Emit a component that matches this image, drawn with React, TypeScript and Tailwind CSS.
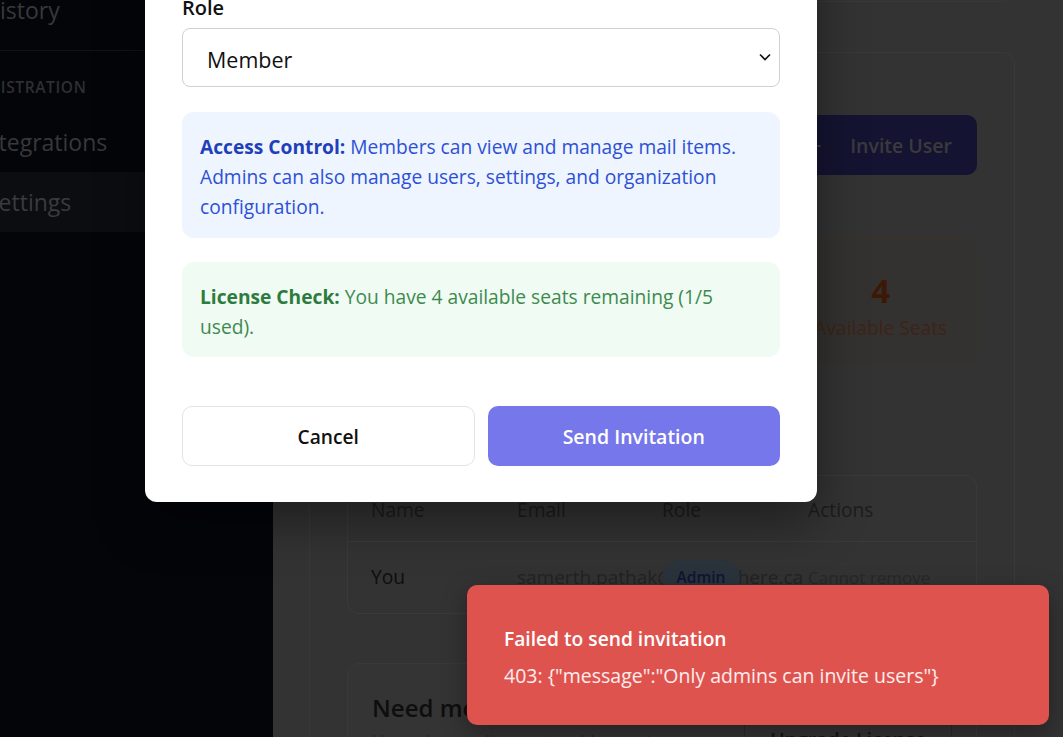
import { Clock, Plug, Settings, Plus, Users } from "lucide-react";

const stats = [
  { value: "1", label: "Seats Used", box: "bg-[#2f3339] border-[#303a47]", num: "text-[#0f1d3d]", text: "text-[#1a2540]" },
  { value: "5", label: "Total Seats", box: "bg-[#31342f] border-[#2f3d31]", num: "text-[#0b2a14]", text: "text-[#173020]" },
  { value: "4", label: "Available Seats", box: "bg-[#343230] border-[#3a3229]", num: "text-[#3c1806]", text: "text-[#3c2418]" },
];

function Sidebar() {
  return (
    <aside className="w-[273px] shrink-0 bg-[#040509] overflow-hidden">
      <div className="-ml-[75px] w-[348px]">
        <div className="-mt-[20px] h-[60px] flex items-center gap-[14px] pl-[22px] text-[23px] font-medium text-[#37383b]">
          <Clock size={22} />
          History
        </div>
        <div className="mt-[10px] border-t border-[#111318]" />
        <div className="pt-[24px] pl-[20px] h-[50px] flex items-center text-[15.5px] font-semibold tracking-[0.04em] uppercase text-[#2e2f33]">
          Administration
        </div>
        <div className="mt-[11px] h-[60px] flex items-center gap-[14px] pl-[17px] text-[23px] font-medium text-[#37383b]">
          <Plug size={22} />
          Integrations
        </div>
        <div className="h-[60px] flex items-center gap-[14px] pl-[25px] bg-[#0c0d11] text-[23px] font-medium text-[#3a3b3e]">
          <Settings size={22} />
          Settings
        </div>
      </div>
    </aside>
  );
}

function Background() {
  return (
    <main className="flex-1 bg-[#333333] overflow-hidden">
      <div className="pl-[36px] w-[742px]">
        {/* card above, scrolled out */}
        <div className="-mt-[58px] h-[60px] rounded-[12px] border border-[#393939]" />

        <section className="mt-[50px] rounded-[12px] border border-[#393939] px-[37px] pt-[36px] pb-[40px]">
          <div className="h-[112px] flex items-center justify-between">
            <div>
              <h2 className="text-[27px] font-bold text-[#111]">Team Management</h2>
              <p className="text-[17px] text-[#262626]">Manage who has access to your organization</p>
            </div>
            <button className="h-[60px] pt-[2px] flex items-center gap-[26px] rounded-[10px] bg-[#141432] pl-[24px] pr-[25px] text-[19.5px] font-semibold text-[#3a3a3d]">
              <Plus size={20} strokeWidth={2.5} />
              Invite User
            </button>
          </div>

          <div className="mt-[37px] grid grid-cols-3 gap-[20px]">
            {stats.map((s) => (
              <div key={s.label} className={`h-[127px] rounded-[12px] border pt-[32px] pl-[4px] text-center ${s.box}`}>
                <div className={`h-[40px] text-[33px] leading-[40px] font-bold ${s.num}`}>{s.value}</div>
                <div className={`mt-[3px] text-[19.2px] leading-[28px] ${s.text}`}>{s.label}</div>
              </div>
            ))}
          </div>

          <div className="mt-[40px] h-[70px] flex items-center gap-3 text-[21px] font-semibold text-[#111]">
            <Users size={22} />
            Team Members (1)
          </div>

          <div className="rounded-[12px] border border-[#3a3a3a]">
            <div className="h-[66px] pt-[3px] grid grid-cols-[146px_145px_146px_1fr] items-center px-[23px] border-b border-[#3a3a3a] text-[19.2px] font-medium text-[#1c1c1c]">
              <span>Name</span>
              <span>Email</span>
              <span>Role</span>
              <span>Actions</span>
            </div>
            <div className="h-[71px] grid grid-cols-[146px_145px_146px_1fr] items-center px-[23px]">
              <span className="text-[19.2px] font-medium text-[#0d0d0d]">You</span>
              <span className="whitespace-nowrap text-[19px] text-[#232323]">samerth.pathak@somewhere.ca</span>
              <span className="relative">
                <span className="inline-flex h-[36px] w-[78px] items-center justify-center rounded-full bg-[#2b333c] text-[15.5px] font-semibold text-[#101634]">
                  Admin
                </span>
              </span>
              <span className="text-[17px] text-[#282828] whitespace-nowrap">Cannot remove</span>
            </div>
          </div>

          <div className="mt-[49px] rounded-[12px] border border-[#393939] bg-[#343434] px-[24px] pt-[28px] pb-[24px] flex items-start justify-between gap-[24px]">
            <div className="min-w-0">
              <h3 className="text-[24px] leading-[32px] font-semibold text-[#0e0e0e]">Need more seats?</h3>
              <p className="mt-[4px] text-[17px] text-[#262626]">Upgrade your license to add more team members</p>
            </div>
            <button className="shrink-0 whitespace-nowrap mt-[22px] h-[52px] rounded-[10px] border border-[#2a2a2a] px-[25px] text-[19.5px] font-semibold text-[#151515]">
              Upgrade License
            </button>
          </div>
        </section>
      </div>
    </main>
  );
}

function InviteModal() {
  return (
    <div className="absolute left-[145px] bottom-[235px] w-[672px] rounded-[12px] bg-white px-[37px] pt-[32px] pb-[36px] shadow-[0_20px_50px_rgba(0,0,0,0.4)]">
      <h2 className="text-[25px] font-bold text-[#111]">Invite Team Member</h2>
      <label className="mt-[24px] block text-[20px] leading-[26px] font-semibold text-[#111]">Email Address</label>
      <input
        className="mt-[7px] h-[59px] w-full rounded-[8px] border border-[#d0d0d0] px-[24px] text-[21.5px]"
        placeholder="user@example.com"
        readOnly
      />
      <label className="mt-[24px] block text-[20px] leading-[26px] font-semibold text-[#111]">Role</label>
      <div className="relative mt-[7px]">
        <select
          className="h-[59px] w-full appearance-none rounded-[8px] border border-[#d0d0d0] bg-white px-[24px] pt-[5px] pb-0 text-[21.5px] text-[#111]"
          defaultValue="member"
        >
          <option value="member">Member</option>
          <option value="admin">Admin</option>
        </select>
        <svg className="pointer-events-none absolute right-[9px] top-[25px]" width="12" height="8" viewBox="0 0 12 8" fill="none">
          <polyline points="1,1.5 6,6.5 11,1.5" stroke="#111" strokeWidth="1.6" />
        </svg>
      </div>

      <div className="mt-[25px] rounded-[12px] bg-[#eef5fe] px-[18px] pt-[20px] pb-[16px] text-[19.2px] leading-[30px] text-[#2d50d6]">
        <strong className="font-bold text-[#1f40ba]">Access Control:</strong> Members can view and manage mail items.
        Admins can also manage users, settings, and organization configuration.
      </div>

      <div className="mt-[24px] rounded-[12px] bg-[#f0fbf3] px-[18px] pt-[20px] pb-[15px] text-[19.2px] leading-[30px] text-[#3d8a4f]">
        <strong className="font-bold text-[#2e7b40]">License Check:</strong> You have 4 available seats remaining (1/5
        used).
      </div>

      <div className="mt-[49px] grid grid-cols-2 gap-[13px]">
        <button className="h-[60px] pt-[2px] rounded-[10px] border border-[#e3e3e3] bg-white text-[19.2px] font-semibold text-[#111]">
          Cancel
        </button>
        <button className="h-[60px] pt-[2px] rounded-[10px] bg-[#7577ea] text-[19.5px] font-semibold text-white">
          Send Invitation
        </button>
      </div>
    </div>
  );
}

function Toast() {
  return (
    <div className="absolute left-[467px] top-[585px] w-[582px] h-[140px] rounded-[10px] bg-[#df534f] px-[37px] pt-[4px] flex flex-col justify-center shadow-[0_8px_24px_rgba(0,0,0,0.35)]">
      <p className="text-[19.2px] leading-[28px] font-semibold text-white">Failed to send invitation</p>
      <p className="mt-[9px] text-[19.5px] leading-[28px] text-white/90">
        403: {'{"message":"Only admins can invite users"}'}
      </p>
    </div>
  );
}

export default function App() {
  return (
    <div className="relative flex w-[1063px] h-[737px] overflow-hidden font-['Open_Sans','Noto_Sans',sans-serif]">
      <Sidebar />
      <Background />
      <InviteModal />
      <Toast />
    </div>
  );
}
